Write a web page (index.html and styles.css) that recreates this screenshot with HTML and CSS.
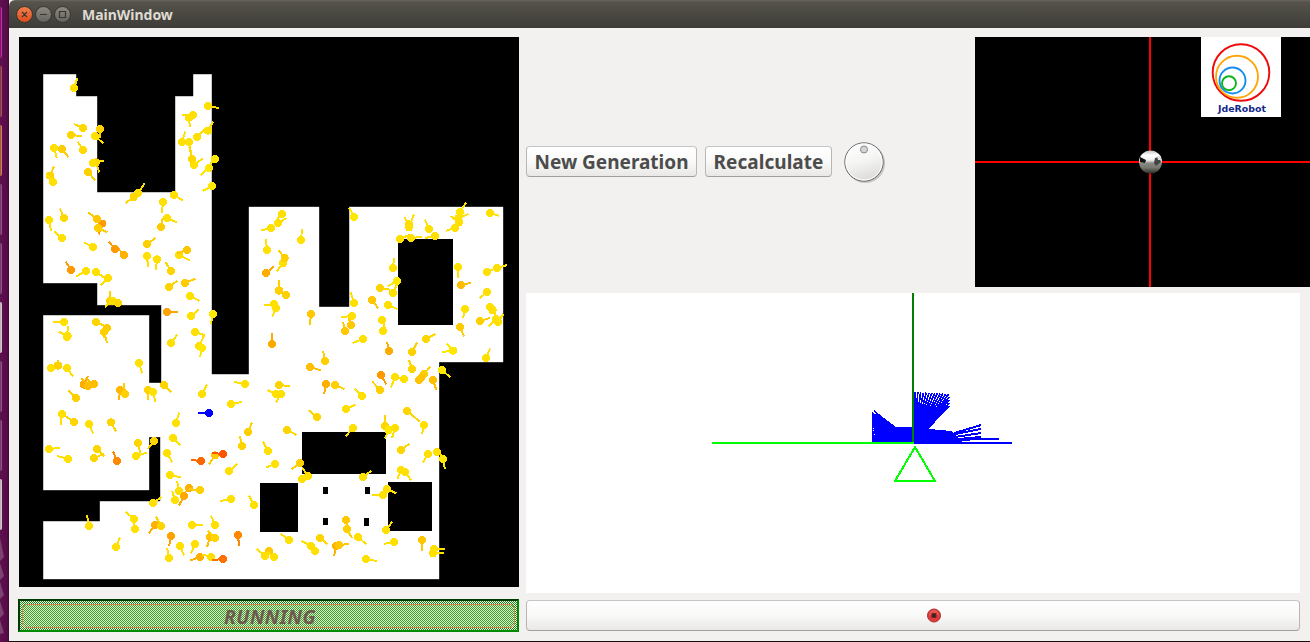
FILE: index.html
```html
<!DOCTYPE html>
<html lang="en">
<head>
<meta charset="utf-8">
<title>MainWindow</title>
<link rel="stylesheet" href="styles.css">
</head>
<body>
<div class="desktop">
  <aside class="launcher">
    <i class="tile magenta"></i><i class="tile red"></i><i class="tile orange"></i><i class="tile"></i><i class="tile"></i><i class="tile light"></i><i class="tile"></i><i class="tile"></i><i class="tile light"></i>
    <svg class="folded" width="5" height="100" viewBox="0 0 5 100"><path d="M0 3L4 22L0 26ZM0 28L4 41L0 45ZM0 47L4 60L0 64ZM0 66L4 79L0 83ZM0 85L4 98L0 99Z" fill="#7c4270"/></svg>
  </aside>
  <main class="window">
    <header class="titlebar">
      <svg class="controls" width="58" height="20" viewBox="0 0 58 20">
        <defs>
          <linearGradient id="close" x2="0" y2="1"><stop stop-color="#f4804f"/><stop offset="1" stop-color="#dd4a1c"/></linearGradient>
          <linearGradient id="ctl" x2="0" y2="1"><stop stop-color="#8d8b83"/><stop offset="1" stop-color="#64625b"/></linearGradient>
        </defs>
        <g stroke="#34332e"><circle cx="9.5" cy="9.5" r="8" fill="url(#close)"/><circle cx="28.5" cy="9.5" r="8" fill="url(#ctl)"/><circle cx="47.5" cy="9.5" r="8" fill="url(#ctl)"/></g>
        <path d="M7 7l5 5m0-5l-5 5M25 9.5h7M44.500 6.500h6v6h-6z" fill="none" stroke="#3a3732" stroke-width="1.200"/>
      </svg>
      <h1 class="title">MainWindow</h1>
    </header>
    <div class="content">
      <section class="left">
        <svg id="map" class="map" width="500" height="550" viewBox="19 37 500 550" shape-rendering="crispEdges">
          <rect x="19" y="37" width="500" height="550"/>
          <path fill="#fff" stroke="#777" stroke-width=".4" d="M43 74H76V96H97V192H175V96H193V74H211.500V374H248.500V206.500H319V306.500H349V206.500H503V362H439V579H43V521H99.500V501H160V437H149V490H43V315H149V382.500H161V305H97V283H43Z"/>
          <path d="M398 239h55v86h-55zM302 432h84v42h-84zM260 483h38v49h-38zM388 482h44v49h-44zM323 487h5v7h-5zM365 487h5v7h-5zM323 518h5v7h-5zM364 518h5v8h-5z"/>
        </svg>
        <button class="run"><span>RUNNING</span></button>
      </section>
      <section class="right">
        <div class="top">
          <div class="tools">
            <button class="btn gen"><span>New Generation</span></button>
            <button class="btn rec"><span>Recalculate</span></button>
            <svg class="dial" width="46" height="46" viewBox="0 0 46 46">
              <defs><linearGradient id="knob" x2=".3" y2="1"><stop stop-color="#fff"/><stop offset=".55" stop-color="#f5f5f4"/><stop offset="1" stop-color="#dfdedd"/></linearGradient></defs>
              <circle cx="24.300" cy="24.300" r="19.800" fill="#aaa" opacity=".6"/>
              <circle cx="23" cy="23" r="19.200" fill="url(#knob)" stroke="#686868"/>
              <circle cx="23" cy="23" r="18" fill="none" stroke="#fff"/>
              <circle cx="23" cy="10.500" r="3.500" fill="#d4d4d4" stroke="#888"/>
            </svg>
          </div>
          <svg class="teleop" width="335" height="250" viewBox="0 0 335 250">
            <defs>
              <linearGradient id="ball" x2="0" y2="1"><stop stop-color="#c0c0c0"/><stop offset=".2" stop-color="#fff"/><stop offset=".42" stop-color="#eee"/><stop offset=".55" stop-color="#8a8a84"/><stop offset=".75" stop-color="#77776f"/><stop offset="1" stop-color="#2a2a2a"/></linearGradient>
            </defs>
            <rect width="335" height="250"/>
            <path d="M0 125H335M175 0V250" stroke="#f00" stroke-width="2"/>
            <circle cx="175.500" cy="125" r="11.500" fill="url(#ball)"/>
            <path d="M165 120l6 3l-1 3l-5-1z" fill="#111"/><path d="M180 121l4-1l2 5l-5 4l-2-3z" fill="#444"/><path d="M182 119h4v4h-3z" fill="#ddd"/>
            <rect x="226" width="80" height="80" fill="#fff"/>
            <g fill="none" stroke-width="1.900"><circle cx="266" cy="35.500" r="28.300" stroke="#ef0909"/><circle cx="262" cy="39.700" r="21" stroke="#ffa50a"/><circle cx="257.500" cy="43.500" r="13" stroke="#168ef0"/><circle cx="254" cy="46.200" r="7" stroke="#0eb51a"/></g>
            <text class="logo" x="243" y="75" textLength="48" lengthAdjust="spacingAndGlyphs">JdeRobot</text>
          </svg>
        </div>
        <svg id="laser" class="laser" width="774" height="300" viewBox="526 293 774 300" shape-rendering="crispEdges">
          <path d="M914 443V427H896L876 412L875 441V443ZM914 443V402L931 406L941 411L929 426V429L952 431L962 442Z" fill="#00f"/>
          <g id="rays" stroke="#00f"></g>
          <path d="M954 433L968 429L981 425M955 434L981 429M955 437L981 433M958 439L981 437M960 440L981 439H999" stroke="#00f" stroke-width="2" fill="none"/>
          <path d="M914 443H1012" stroke="#00f" stroke-width="2"/>
          <path d="M913 293V442" stroke="#008000" stroke-width="2"/>
          <path d="M712 443H914M915 447L895 481H935Z" stroke="#0f0" stroke-width="2" fill="none"/>
        </svg>
        <button class="btn stop">
          <svg width="16" height="16" viewBox="0 0 16 16"><circle cx="8" cy="7.500" r="6.500" fill="#df3b3b" stroke="#a92d2d"/><path d="M3 7a5 5 0 0 1 10 0z" fill="#ea6860" opacity=".6"/><rect x="6" y="5.500" width="4" height="4" fill="#292929" stroke="#7b2323"/></svg>
        </button>
      </section>
    </div>
  </main>
</div>
<script src="particles.js"></script>
</body>
</html>
```
FILE: styles.css
```css
* { box-sizing: border-box; }
body { margin: 0; width: 1310px; height: 642px; overflow: hidden; font-family: "Noto Sans", sans-serif; }
svg { display: block; flex: none; }
button { padding: 0; margin: 0; font-family: inherit; }
.desktop { display: flex; height: 642px; background: #560b46; }
.launcher { width: 9px; flex: none; padding-top: 7px; display: flex; flex-direction: column; gap: 8px; background: linear-gradient(90deg, #5e1150 0, #570b47 7px, #3a0a31 9px); }
.tile { flex: none; width: 2px; height: 51px; background: #7b3a6d; border-right: 1px solid #8f5484; border-radius: 0 3px 3px 0; }
.magenta { background: #8e0b78; border-color: #ac3b9c; }
.red { background: #843748; border-color: #a4565f; }
.orange { background: #a8573d; border-color: #c98262; }
.light { background: #bcb4b8; border-color: #d1cacc; }
.folded { margin-top: -3px; }
.window { flex: 1; display: flex; flex-direction: column; border-bottom: 1px solid #151009; background: #f2f1f0; }
.titlebar { flex: none; height: 28px; display: flex; align-items: center; padding: 0 0 0 6px; border-radius: 6px 0 0 0; background: linear-gradient(#686660 0, #55534b 2px, #3d3c37 28px); }
.controls { margin-top: 1px; }
.title { margin: 1px 0 0 9px; font-size: 14px; line-height: 20px; font-weight: 700; color: #dfdbd2; letter-spacing: -.02px; }
.content { display: flex; gap: 7px; padding: 9px 0 0 9px; }
.left { width: 501px; flex: none; display: flex; flex-direction: column; gap: 12px; }
.map { margin-left: 1px; }
.run { width: 501px; height: 33px; border: 2px solid; border-color: #003b00 #008b00 #008b00 #003b00; background: repeating-conic-gradient(#168a10 0 25%, #f5fff1 0 50%) 0 0 / 2px 2px; padding: 0 2px; }
.run span { display: flex; height: 24px; align-items: center; justify-content: center; border: 1px solid #d1854b; border-radius: 5px; background: rgba(160, 200, 115, .3); color: #70594f; font-size: 19px; font-weight: 700; font-style: italic; line-height: 22px; letter-spacing: .5px; padding: 2px 0 0 3px; }
.right { flex: 1; display: flex; flex-direction: column; }
.top { display: flex; justify-content: space-between; height: 256px; }
.tools { display: flex; align-items: center; height: 249px; }
.btn { border: 1px solid; border-color: #c7c5c3 #b9b6b3 #a19f9c; border-radius: 4px; background: linear-gradient(#fff, #f9f9f8 50%, #e9e8e6); color: #4c4c4c; display: flex; align-items: center; justify-content: center; height: 31px; font-size: 19px; font-weight: 700; line-height: 27px; white-space: nowrap; }
.btn span { padding-top: 1px; }
.gen { width: 171px; margin-right: 8px; }
.rec { width: 127px; margin-right: 9px; letter-spacing: .05px; }
.dial { margin-top: 1px; }
.logo { font: 700 9.5px "DejaVu Sans", sans-serif; fill: #12288c; }
.laser { background: #fff; }
.stop { width: 774px; margin-top: 7px; padding-left: 41px; }
```
FILE: particles.js
```js
const NS = 'http://www.w3.org/2000/svg';
function add(parent, tag, attrs) {
  const el = document.createElementNS(NS, tag);
  for (const k in attrs) el.setAttribute(k, attrs[k]);
  parent.appendChild(el);
}

// Particle tiles: origin, then "x,y,headingX,headingY[,colour]" in thirds of a pixel.
const tiles = [
  [0, 0, `222,264,232,235 249,384,222,372,ffd800 300,387,300,415,ffd300 285,408,310,430 213,405,245,408,ffd500 162,444,171,475 186,447,205,471,ffcc00 249,450,233,425,ffd900 288,487,298,517,ffd400 279,489,311,482 264,516,286,541,ffd000 150,527,162,499,ffd300 159,546,138,520 414,579,434,550 401,591,377,609,ffd800 522,585,548,601 489,606,486,638 624,318,656,324 579,345,547,345 567,353,570,382 624,392,640,365 591,411,612,390 546,426,556,395 567,426,573,458 576,477,568,440,ffd800 582,495,608,476 645,477,624,500,ffe800 627,504,602,525,ffe800 636,558,608,573,ffe800`],
  [0, 200, `147,60,153,92 192,54,180,26,ffd800 306,71,296,103,ff9d00 291,57,265,38,ffc800 294,84,322,97,ffd000 186,114,163,95 279,141,253,128 372,165,350,140,ffb300 345,147,326,125,ff9900 213,210,197,185,ff9900 258,213,229,229 288,216,312,232 324,234,302,256 330,303,330,272,ffd000 338,302,315,321 354,309,330,300,ffd800 501,54,530,67 483,81,488,55,ffcc00 441,132,466,114,ffd000 441,168,444,200 471,178,468,209 537,165,569,181 561,150,532,160,ffc700 513,213,497,187,ffd500 507,261,532,242,ffd500 555,249,586,236,ffcc00 570,288,599,303 501,336,533,336,ffa300 573,348,596,329 639,342,633,371,ffe800 585,396,615,406 597,438,613,405 606,444,600,471,ffe800 513,429,532,404 192,366,160,366 201,411,204,377 203,408,176,395 288,366,315,378,ffd500 321,384,312,415,ffcc00 312,396,321,428,ffd000 153,504,180,490 174,497,173,480,ffd000 201,504,219,529 417,489,427,520 252,554,264,528,ffac00 264,558,245,535,ffbe00 282,552,255,535,ffbe00 228,594,205,572,ffd000 360,570,357,600,ffb900 375,582,372,550,ffcf00 444,570,444,600,ffd500 459,576,467,607 492,555,514,577,ffd500 606,582,621,554 735,552,703,546`],
  [0, 390, `186,72,182,104 222,96,195,77,ffd500 267,102,279,130 333,97,348,124,ffd500 147,177,179,174 204,207,172,198 291,177,313,198,ffd500 282,204,312,192,ffd500 351,213,339,184,ff8800 414,159,421,190,ffd500 408,198,440,188 462,153,442,178,ffd500 528,99,538,68 519,144,542,166 501,189,517,217 645,196,627,223,ffc800 603,213,573,210,ff6600 669,192,637,189,ff5500 687,243,712,222 744,126,756,97,ffd000 726,168,720,139,ffd500 693,42,725,36 627,69,595,69,0000ff 510,255,542,262 537,303,531,272 567,294,545,320,ffb000 600,300,568,298,ffd000 552,318,537,347,ffa800 525,330,516,302 459,339,484,321 693,327,661,333 762,345,747,317 267,408,261,376 402,387,377,365 405,417,402,395 348,471,360,442 465,405,446,430,ffb000 483,408,468,380,ffd500 576,405,608,405 645,405,633,377 630,441,621,472,ffc000 645,444,624,422,ffd500 513,438,507,469,ffa300 714,435,717,467,ff8800 540,468,552,496 585,462,573,490 507,504,501,473 600,501,571,511,ffb000 633,501,605,493 669,507,637,510,ff7000`],
  [240, 190, `126,72,105,95 114,99,140,84 93,114,64,121 183,150,186,118 81,180,78,148 129,220,110,244 134,204,116,181,ffd000 78,249,101,230,ffac00 117,302,117,270,ffcf00 138,315,115,298,ffd000 102,342,73,346 108,354,97,380 213,372,210,404,ffc800 96,462,96,430,ffac00 255,513,249,482,ffd000 210,531,242,541,ffbe00 342,81,328,54,ffe800 342,339,332,307 333,405,325,380,ffc800 336,378,304,381 315,423,309,395,ffc800 369,447,338,459 396,330,415,355,ffc800 420,294,450,299,ffd500 459,309,470,285 471,273,443,289,ffe800 459,234,462,205 444,345,472,357 426,390,435,415 429,423,433,395 447,483,441,455,ffac00 516,486,531,458,ffd000 558,447,586,432,ffd800 639,482,620,461,ffe800 639,482,607,486,ffe800 516,537,507,510,ffd500 423,555,439,583,ff9900 465,561,453,592 492,567,465,560 552,552,571,530,ffd000 544,563,552,552,ffc300 537,570,544,563,ffc300 579,570,589,600,ffc000 606,540,631,562,ffe800 507,112,522,73 507,103,493,82 567,117,555,89 480,147,507,135 513,144,545,141 585,138,555,144 660,66,678,38,ffe800 645,114,617,123 657,97,631,78 655,85,685,72 750,69,778,78 654,231,654,263 663,285,692,279,ffbe00 741,246,768,235 771,234,802,225 741,306,719,325 675,357,669,385 660,411,672,439,ffcc00 750,351,765,372 758,360,770,382 720,393,750,384,ffd000 768,387,746,408 774,396,790,372 738,504,750,476`],
  [240, 380, `117,15,149,18,ffd500 108,42,82,30 123,42,108,67 258,12,252,43,ffb000 285,15,313,27,ffd000 366,48,344,26 420,30,397,5,ffd000 318,87,346,74 231,111,205,90,ffd500 141,150,170,165,ffd500 84,213,69,185 105,252,79,262 180,249,155,268,ffd000 204,288,186,262 186,297,205,285 339,144,317,169 369,291,394,272 435,138,435,106,ffd500 446,150,435,175,ffe800 465,144,456,175 501,93,540,125,ffd500 552,135,546,163 483,210,508,191,ffd500 564,222,549,247 591,216,615,235 609,237,615,268,ffe800 483,270,472,298 495,276,514,301 441,327,469,340 429,345,397,345 438,450,457,425 42,375,26,347 147,480,122,461 240,474,262,492,ffd500 318,420,321,445,ffc800 321,447,336,474,ffd000 354,471,379,493 213,498,185,483 225,513,205,490 87,513,75,528,ffc800 75,528,50,506 102,531,80,515 288,498,282,529,ffb300 297,495,328,492,ffc800 378,537,410,543 462,486,431,492 546,480,546,512,ffc800 582,507,614,507 579,520,611,518`]
];
const map = document.getElementById('map');
for (const [ox, oy, list] of tiles) {
  for (const item of list.split(' ')) {
    const p = item.split(',');
    const c = '#' + (p[4] || 'ffe000');
    const x = ox + p[0] / 3, y = oy + p[1] / 3;
    add(map, 'line', { x1: x, y1: y, x2: ox + p[2] / 3, y2: oy + p[3] / 3, stroke: c, 'stroke-width': 2 });
    add(map, 'circle', { cx: x, cy: y, r: 4, fill: c });
  }
}

// Laser beams fan out from the sensor.
const rays = document.getElementById('rays');
const beam = (x, y) => add(rays, 'line', { x1: 914, y1: 443, x2: x, y2: y, 'stroke-width': 1.7 });
for (let x = 915; x < 950; x += 2.8) beam(x, 392 + (x - 915) / 17);
for (let y = 397; y < 408; y += 3) beam(949, y);
for (let y = 413; y < 443; y += 2) beam(872, y);
beam(874, 411);
```
